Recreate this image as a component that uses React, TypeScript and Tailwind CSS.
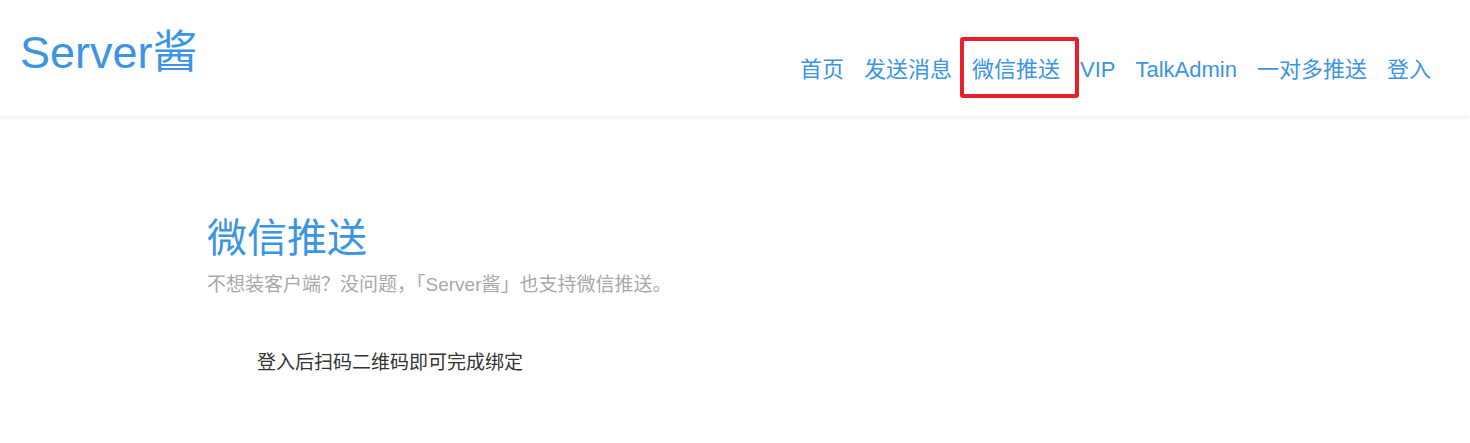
const font = "font-['Liberation_Sans','Noto_Sans_CJK_SC',sans-serif]";

const navItems = ["首页", "发送消息", "微信推送", "VIP", "TalkAdmin", "一对多推送", "登入"];

function Header() {
  return (
    <header className="h-[116px] bg-white shadow-[0_2px_4px_rgba(0,0,0,0.07)] flex justify-between items-start px-[20px] relative z-10">
      <a className="mt-[27px] text-[45px] leading-[52px] text-[#3b94e4]">Server酱</a>
      <nav className="mt-[54px] mr-[19px] flex items-center gap-[20px] text-[22px] leading-[32px] text-[#3b94e4]">
        {navItems.map((item) => (
          <span key={item} className="relative">
            {item}
            {/* red highlight box around the active tab */}
            {item === "微信推送" && (
              <span className="absolute left-[-12px] right-[-19px] top-[-17px] bottom-[-12px] border-4 border-[#e8202a] rounded-[3px]" />
            )}
          </span>
        ))}
      </nav>
    </header>
  );
}

export default function App() {
  return (
    <div className={`min-h-[443px] bg-white ${font}`}>
      <Header />
      <main className="w-[1056px] mx-auto pt-[96px]">
        <h1 className="text-[40px] leading-[52px] text-[#3b94e4]">微信推送</h1>
        <p className="mt-[8px] text-[19px] leading-[26px] text-[#a8a8a8]">
          不想装客户端？没问题，「Server酱」也支持微信推送。
        </p>
        <div className="mt-[52px] pl-[50px] text-[19px] leading-[26px] text-[#333]">
          登入后扫码二维码即可完成绑定
        </div>
      </main>
    </div>
  );
}
